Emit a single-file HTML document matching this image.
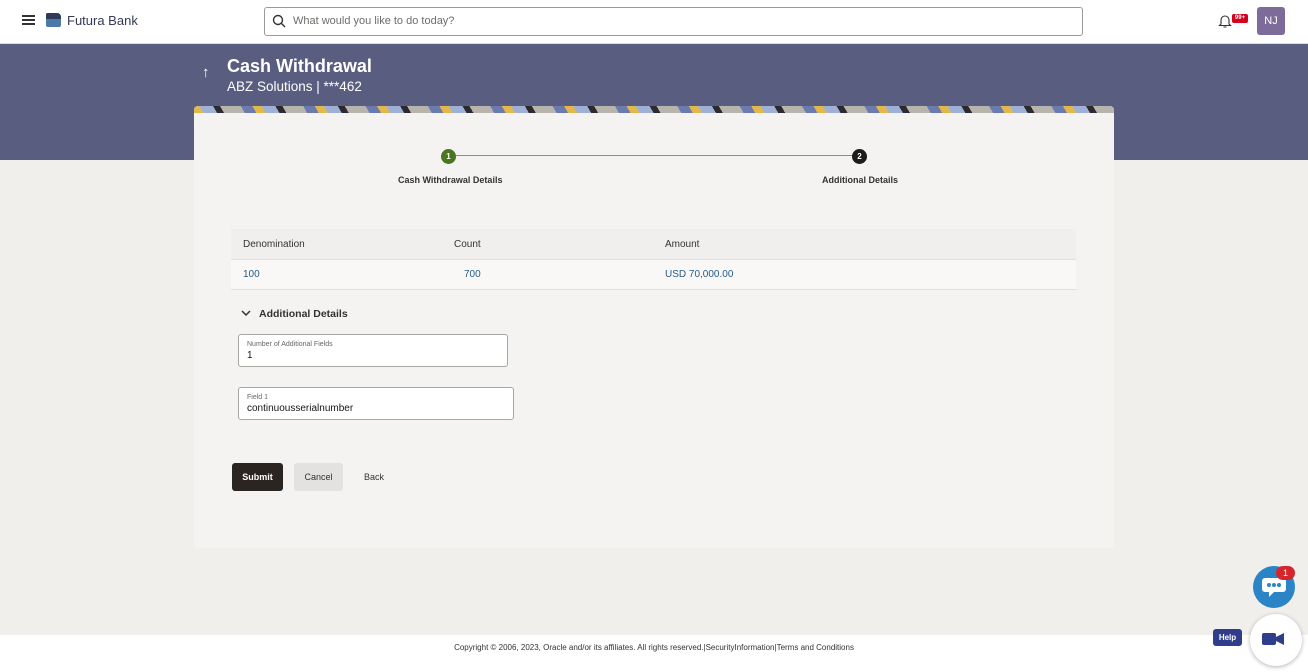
<!DOCTYPE html>
<html><head><style>
*{box-sizing:border-box;margin:0;padding:0}
body{width:1308px;height:672px;position:relative;overflow:hidden;font-family:"Liberation Sans",sans-serif;background:#f1efec;color:#161513}
.hdr{position:absolute;left:0;top:0;width:1308px;height:44px;background:#fff;border-bottom:1px solid #ddd}
.ban{position:absolute;left:0;top:44px;width:1308px;height:116px;background:#595e80}
.card{position:absolute;left:194px;top:106px;width:920px;height:442px;background:#f4f3f2;border-radius:4px;overflow:hidden}
.strip{height:7px;background:repeating-linear-gradient(60deg,#e3b84a 0 8px,#9fb0d6 8px 20px,#2c2a2e 20px 26px,#b7b4ad 26px 44px,#6b7bb0 44px 54px)}
.t{position:absolute;white-space:nowrap}
.inp{position:absolute;background:#fff;border:1px solid #a9a6a2;border-radius:3px}
.foot{position:absolute;left:0;top:635px;width:1308px;height:37px;background:#fff;font-size:8px;text-align:center;padding-top:8px;color:#333}
</style></head><body>
<div class="hdr">
 <div style="position:absolute;left:22px;top:15px;width:13px;height:2px;background:#333;box-shadow:0 4px 0 #333,0 8px 0 #333"></div>
 <div style="position:absolute;left:46px;top:13px;width:15px;height:14px;background:#4d79a8;border-radius:2px 4px 2px 2px"></div>
 <div style="position:absolute;left:46px;top:13px;width:15px;height:6px;background:#2d3a5a;border-radius:2px 4px 0 0"></div>
 <div class="t" style="left:67px;top:13px;font-size:13px;color:#333a55">Futura Bank</div>
 <div style="position:absolute;left:264px;top:7px;width:819px;height:29px;border:1px solid #9e9b97;border-radius:3px"></div>
 <svg style="position:absolute;left:272px;top:14px" width="14" height="14" viewBox="0 0 14 14"><circle cx="6" cy="6" r="4.5" fill="none" stroke="#333" stroke-width="1.4"/><path d="M9.5 9.5L13 13" stroke="#333" stroke-width="1.4"/></svg>
 <div class="t" style="left:293px;top:15px;font-size:11px;color:#6f6c69">What would you like to do today?</div>
 <svg style="position:absolute;left:1218px;top:13px" width="14" height="16" viewBox="0 0 14 16"><path d="M3 11V7a4 4 0 018 0v4l1.5 1.5h-11z M5.5 14h3" fill="none" stroke="#333" stroke-width="1.1"/></svg>
 <div class="t" style="left:1232px;top:14px;width:16px;height:9px;background:#d6001c;border-radius:2px;font-size:6px;color:#fff;text-align:center;line-height:9px;font-weight:bold">99+</div>
 <div class="t" style="left:1257px;top:7px;width:28px;height:28px;background:#7d6b99;border-radius:3px;color:#fff;font-size:11px;text-align:center;line-height:28px">NJ</div>
</div>
<div class="ban">
 <div class="t" style="left:202px;top:20px;color:#fff;font-size:15px">↑</div>
 <div class="t" style="left:227px;top:12px;color:#fff;font-size:18px;font-weight:bold">Cash Withdrawal</div>
 <div class="t" style="left:227px;top:35px;color:#fff;font-size:13.5px">ABZ Solutions | ***462</div>
</div>
<div class="card"><div class="strip"></div>
 <div style="position:absolute;left:262px;top:49px;width:404px;height:1px;background:#8f8c89"></div>
 <div class="t" style="left:247px;top:43px;width:15px;height:15px;border-radius:50%;background:#4b7522;color:#fff;font-size:8px;font-weight:bold;text-align:center;line-height:15px">1</div>
 <div class="t" style="left:658px;top:43px;width:15px;height:15px;border-radius:50%;background:#1e1c1a;color:#fff;font-size:8px;font-weight:bold;text-align:center;line-height:15px">2</div>
 <div class="t" style="left:204px;top:69px;font-size:9px;font-weight:bold;color:#333">Cash Withdrawal Details</div>
 <div class="t" style="left:628px;top:69px;font-size:9px;font-weight:bold;color:#333">Additional Details</div>
 <div style="position:absolute;left:37px;top:123px;width:845px;height:31px;background:#f0efed;border-bottom:1px solid #e2e0dd"></div>
 <div style="position:absolute;left:37px;top:154px;width:845px;height:30px;background:#f9f8f7;border-bottom:1px solid #e2e0dd"></div>
 <div class="t" style="left:49px;top:133px;font-size:10px;color:#333">Denomination</div>
 <div class="t" style="left:260px;top:133px;font-size:10px;color:#333">Count</div>
 <div class="t" style="left:471px;top:133px;font-size:10px;color:#333">Amount</div>
 <div class="t" style="left:49px;top:163px;font-size:10px;color:#245c8a">100</div>
 <div class="t" style="left:270px;top:163px;font-size:10px;color:#245c8a">700</div>
 <div class="t" style="left:471px;top:163px;font-size:10px;color:#245c8a">USD 70,000.00</div>
 <svg style="position:absolute;left:47px;top:203px" width="10" height="8" viewBox="0 0 10 8"><path d="M1 2l4 4 4-4" fill="none" stroke="#333" stroke-width="1.5"/></svg>
 <div class="t" style="left:65px;top:202px;font-size:10.5px;font-weight:bold;color:#333">Additional Details</div>
 <div class="inp" style="left:44px;top:228px;width:270px;height:33px"><div class="t" style="left:8px;top:6px;font-size:7px;color:#666">Number of Additional Fields</div><div class="t" style="left:8px;top:15px;font-size:10px">1</div></div>
 <div class="inp" style="left:44px;top:281px;width:276px;height:33px"><div class="t" style="left:8px;top:6px;font-size:7px;color:#666">Field 1</div><div class="t" style="left:8px;top:15px;font-size:10px">continuousserialnumber</div></div>
 <div class="t" style="left:38px;top:357px;width:51px;height:28px;background:#2b2522;border-radius:3px;color:#fff;font-size:9px;font-weight:bold;text-align:center;line-height:28px">Submit</div>
 <div class="t" style="left:100px;top:357px;width:49px;height:28px;background:#e4e2e0;border-radius:3px;color:#333;font-size:9px;text-align:center;line-height:28px">Cancel</div>
 <div class="t" style="left:170px;top:366px;font-size:9px;color:#333">Back</div>
</div>
<div class="foot">Copyright © 2006, 2023, Oracle and/or its affiliates. All rights reserved.|SecurityInformation|Terms and Conditions</div>
<div class="t" style="left:1253px;top:566px;width:42px;height:42px;border-radius:50%;background:#2a84c6"></div>
<svg style="position:absolute;left:1261px;top:577px" width="26" height="22" viewBox="0 0 26 22"><path d="M4 1h18a3 3 0 013 3v8a3 3 0 01-3 3H13l-5 5v-5H4a3 3 0 01-3-3V4a3 3 0 013-3z" fill="#fff"/><circle cx="8" cy="8" r="2" fill="#2a84c6"/><circle cx="13" cy="8" r="2" fill="#2a84c6"/><circle cx="18" cy="8" r="2" fill="#2a84c6"/></svg>
<div class="t" style="left:1276px;top:566px;width:19px;height:14px;border-radius:7px;background:#d6262d;color:#fff;font-size:9px;text-align:center;line-height:14px">1</div>
<div class="t" style="left:1250px;top:614px;width:52px;height:52px;border-radius:50%;background:#fff;box-shadow:0 1px 4px rgba(0,0,0,.3)"></div>
<div class="t" style="left:1262px;top:633px;width:14px;height:12px;background:#2f3d8a;border-radius:2px"></div>
<svg style="position:absolute;left:1276px;top:633px" width="8" height="12"><path d="M0 4l8-4v12L0 8z" fill="#2f3d8a"/></svg>
<div class="t" style="left:1213px;top:629px;width:29px;height:17px;background:#2f3d8a;border-radius:3px;color:#fff;font-size:8px;font-weight:bold;text-align:center;line-height:17px">Help</div>
</body></html>
